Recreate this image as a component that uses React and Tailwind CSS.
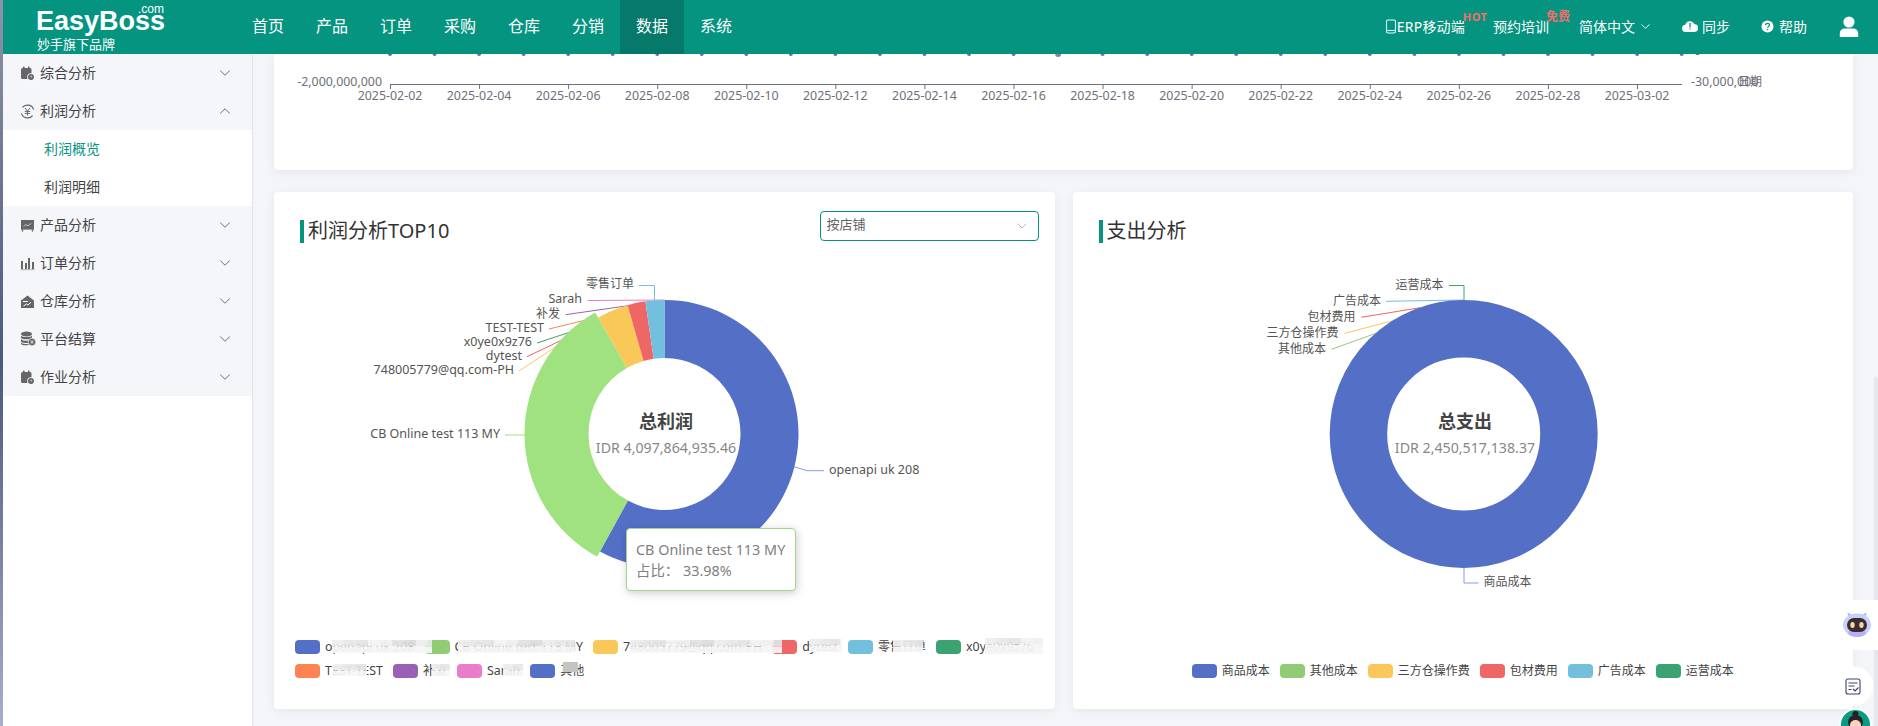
import React from 'react';
import { ChevronDown, ChevronUp } from 'lucide-react';

const NAV = ['首页', '产品', '订单', '采购', '仓库', '分销', '数据', '系统'];
const AXIS_COLOR = '#6e7079';
const BLUE = '#5470c6';

// angle is clockwise from 12 o'clock, in degrees
const polar = (cx, cy, r, deg) => {
  const a = (deg * Math.PI) / 180;
  return [cx + r * Math.sin(a), cy - r * Math.cos(a)];
};

const arcPath = (cx, cy, r0, r1, from, to) => {
  const large = to - from > 180 ? 1 : 0;
  const [x1, y1] = polar(cx, cy, r1, from);
  const [x2, y2] = polar(cx, cy, r1, to);
  const [x3, y3] = polar(cx, cy, r0, to);
  const [x4, y4] = polar(cx, cy, r0, from);
  return `M${x1} ${y1}A${r1} ${r1} 0 ${large} 1 ${x2} ${y2}L${x3} ${y3}A${r0} ${r0} 0 ${large} 0 ${x4} ${y4}Z`;
};

const CalendarIcon = () => (
  <svg width="15" height="15" viewBox="0 0 15 15" fill="#666">
    <rect x="1" y="2" width="10.5" height="11" rx="1.5" />
    <rect x="3" y="0.5" width="1.6" height="3" rx="0.6" />
    <rect x="8" y="0.5" width="1.6" height="3" rx="0.6" />
    <circle cx="11" cy="11" r="3.8" fill="#fff" />
    <circle cx="11" cy="11" r="3" fill="#666" />
    <path d="M11 9.6V11h1.2" stroke="#fff" strokeWidth="0.7" fill="none" />
  </svg>
);

const YuanIcon = () => (
  <svg width="15" height="15" viewBox="0 0 15 15" fill="none" stroke="#666">
    <path d="M13.6 5.6A6.5 6.5 0 0 0 2.4 3.4M1.4 9.4a6.5 6.5 0 0 0 11.2 2.2" strokeWidth="1.2" />
    <path d="M5 4l2.5 3L10 4M4.8 7.4h5.4M4.8 9.4h5.4M7.5 7v4.4" strokeWidth="1" />
  </svg>
);

const ProductIcon = () => (
  <svg width="15" height="15" viewBox="0 0 15 15">
    <rect x="1" y="2" width="13" height="9.6" fill="#666" />
    <path d="M3.5 8.5l2.5-2 2 1.4 3.2-2.6" stroke="#ddd" strokeWidth="0.8" fill="none" />
    <path d="M2.5 11.5v2M12.5 11.5v2" stroke="#666" strokeWidth="1.4" />
  </svg>
);

const BarsIcon = () => (
  <svg width="15" height="15" viewBox="0 0 15 15" fill="#666">
    <rect x="1" y="5" width="2" height="8" />
    <rect x="5" y="7" width="2" height="6" />
    <rect x="8" y="2" width="2" height="11" />
    <rect x="12" y="6" width="2" height="7" />
    <rect x="0.5" y="13" width="14" height="1.2" fill="#bbb" />
  </svg>
);

const HouseIcon = () => (
  <svg width="15" height="15" viewBox="0 0 15 15">
    <path d="M1 6.5L7.5 1.5l6.5 5V14H1z" fill="#666" />
    <path d="M3.5 12l3-2 1.4 1 3-2.6" stroke="#fff" strokeWidth="1" fill="none" />
    <rect x="2.8" y="7" width="5" height="1" fill="#fff" />
  </svg>
);

const CoinsIcon = () => (
  <svg width="16" height="16" viewBox="0 0 16 16">
    <ellipse cx="6.5" cy="3" rx="5.5" ry="2.4" fill="#666" />
    <path d="M1 4.6c1 2 10 2 11 0v2.2c-1 2-10 2-11 0zM1 8c1 2 7 2 8 1.6v2.2c-2 .6-7 .4-8-1.4zM1 11.4c1 1.6 6 2 8 1.4v.6c-2 1.4-7 1.2-8-.4z" fill="#666" />
    <circle cx="12" cy="11" r="3.8" fill="#666" stroke="#fff" strokeWidth="0.6" />
    <path d="M10.6 9.2l1.4 1.6 1.4-1.6M10.6 11.2h2.8M12 10.8v2.2" stroke="#fff" strokeWidth="0.7" fill="none" />
  </svg>
);

const SideItem = ({ icon, label, open }) => (
  <div className="flex h-[38px] items-center pl-[17px] pr-[18px] text-[14px] text-[#444]">
    <span className="flex w-[20px] shrink-0">{icon}</span>
    <span className="flex-1 pb-[2px]">{label}</span>
    {open ? <ChevronUp size={18} strokeWidth={1} /> : <ChevronDown size={18} strokeWidth={1} />}
  </div>
);

const Sidebar = () => (
  <aside className="w-[250px] shrink-0 border-r border-[#e2e4ec] bg-white">
    <div className="bg-[#f5f6fa]">
      <SideItem icon={<CalendarIcon />} label="综合分析" />
      <SideItem icon={<YuanIcon />} label="利润分析" open />
      <div className="bg-white text-[14px]">
        <div className="flex h-[38px] items-center pb-[2px] pl-[41px] text-[#06947f]">利润概览</div>
        <div className="flex h-[38px] items-center pb-[2px] pl-[41px] text-[#444]">利润明细</div>
      </div>
      <SideItem icon={<ProductIcon />} label="产品分析" />
      <SideItem icon={<BarsIcon />} label="订单分析" />
      <SideItem icon={<HouseIcon />} label="仓库分析" />
      <SideItem icon={<CoinsIcon />} label="平台结算" />
      <SideItem icon={<CalendarIcon />} label="作业分析" />
    </div>
  </aside>
);

const Header = () => (
  <header className="flex h-[54px] shrink-0 items-center bg-[#05947f] text-white">
    <div className="relative h-[54px] w-[233px] shrink-0 pl-[33px]">
      <div className="absolute left-[135px] top-[1px] text-[12px] leading-[16px] font-['Liberation_Sans',sans-serif]">.com</div>
      <div className="pt-[6px] text-[27px] font-bold leading-[30px] font-['Liberation_Sans',sans-serif]">EasyBoss</div>
      <div className="pl-[1px] pt-[1px] text-[13px] leading-[15px]">妙手旗下品牌</div>
    </div>
    <nav className="flex h-full text-[16px]">
      {NAV.map(n => (
        <div key={n} className={`flex h-full w-[64px] items-center justify-center pb-[2px] ${n === '数据' ? 'bg-[#06796a]' : ''}`}>{n}</div>
      ))}
    </nav>
    <div className="ml-auto flex items-center pb-[2px] pr-[19px] text-[14px]">
      <div className="relative flex items-center">
        <svg width="12" height="15" viewBox="0 0 12 15" fill="none" stroke="#dff" strokeWidth="1.1">
          <rect x="1.5" y="1" width="9" height="13" rx="1.5" />
          <path d="M1.5 11.5h9" />
        </svg>
        <span className="tracking-[0.2px]">ERP移动端</span>
        <span className="absolute left-[78px] top-[-7px] text-[11px] font-bold tracking-[0.5px] text-[#f56c6c]">HOT</span>
      </div>
      <div className="relative ml-[28px]">
        <span>预约培训</span>
        <span className="absolute left-[53px] top-[-8px] whitespace-nowrap text-[12px] font-bold text-[#f56c6c]">免费</span>
      </div>
      <div className="ml-[30px] flex items-center">
        <span>简体中文</span>
        <ChevronDown size={15} strokeWidth={1.5} className="ml-[3px]" />
      </div>
      <div className="ml-[29px] flex items-center">
        <svg width="16" height="12" viewBox="0 0 16 12" fill="#fff">
          <path d="M4 12a3.6 3.6 0 0 1-.6-7.2A4.8 4.8 0 0 1 12.4 4 4 4 0 0 1 12 12z" />
          <path d="M8 3v4.4M8 8.4v1.2" stroke="#05947f" strokeWidth="1.3" />
        </svg>
        <span className="ml-[4px]">同步</span>
      </div>
      <div className="ml-[31px] flex items-center">
        <svg width="13" height="13" viewBox="0 0 13 13">
          <circle cx="6.5" cy="6.5" r="6" fill="#fff" />
          <path d="M4.6 5.2c0-2.5 3.9-2.4 3.9-.2 0 1.3-1.9 1.5-1.9 2.8M6.6 9v1.2" stroke="#05947f" strokeWidth="1.3" fill="none" />
        </svg>
        <span className="ml-[5px]">帮助</span>
      </div>
      <svg className="ml-[32px]" width="20" height="21" viewBox="0 0 20 21" fill="#fff">
        <circle cx="10" cy="6" r="5.6" />
        <path d="M0.8 21v-3.5C0.8 14 3.4 12.4 6 12.4h8c2.6 0 5.2 1.6 5.2 5.1V21z" />
      </svg>
    </div>
  </header>
);

const TrendCard = () => {
  const ticks = [...Array(15).keys()];
  const dates = ['02-02', '02-04', '02-06', '02-08', '02-10', '02-12', '02-14', '02-16', '02-18', '02-20', '02-22', '02-24', '02-26', '02-28', '03-02'];
  return (
    <div className="h-[116px] shrink-0 rounded-b bg-white shadow-[0_2px_8px_rgba(60,70,110,0.08)]">
      <svg className="block h-[116px] w-full" viewBox="274 54 1579 116" fontSize="12.4" fill={AXIS_COLOR}>
        {[...Array(30).keys()].map(i => (
          <circle key={i} cx={390 + i * 44.54} cy="54" r={i === 15 ? 3 : 2} fill={i === 15 ? '#7b86a8' : BLUE} />
        ))}
        <text x="1694" y="55">0</text>
        <path d="M390 84.5H1682" stroke={AXIS_COLOR} />
        {ticks.map(i => (
          <path key={i} d={`M${390.5 + i * 89.07} 84V89`} stroke={AXIS_COLOR} />
        ))}
        {ticks.map((i) => (
          <text key={i} x={390 + i * 89.07} y="100" textAnchor="middle">2025-{dates[i]}</text>
        ))}
        <text x="382" y="86" textAnchor="end">-2,000,000,000</text>
        <text x="1691" y="86">-30,000,000</text>
        <text x="1738" y="86" fontSize="12">日期</text>
      </svg>
    </div>
  );
};

const PieLabel = ({ x, y, anchor = 'start', size = 12, children }) => (
  <text x={x} y={y + 4} textAnchor={anchor} fontSize={size} fill="#555">{children}</text>
);

const Title = ({ children }) => (
  <h2 className="ml-[26px] mt-[28px] flex h-[23px] items-center border-l-4 border-[#06947f] pb-[2px] pl-[4px] text-[20px] font-normal leading-[21px] text-[#333]">{children}</h2>
);

const Center = ({ x, title, value }) => (
  <>
    <text x={x} y="428" textAnchor="middle" fontSize="18" fontWeight="700" fill="#444">{title}</text>
    <text x={x} y="453" textAnchor="middle" fontSize="14.2" fill="#888">{value}</text>
  </>
);

const ProfitPie = () => {
  const cx = 664.5;
  const cy = 434;
  return (
    <svg className="block h-[380px] w-[780px]" viewBox="274 252 780 380" fill="none">
      <path d="M639 285.5h15.5V300" stroke="#73c0de" />
      <path d="M587.5 300.5L664.6 300" stroke="#ea7ccc" />
      <path d="M565.6 314.7L628 305.7" stroke="#9a60b4" />
      <path d="M549 329L586 320" stroke="#fc8452" />
      <path d="M537 343L573.5 331" stroke="#3ba272" />
      <path d="M527 356.7L566 338" stroke="#ee6666" />
      <path d="M519 371L556 346.7" stroke="#fac858" />
      <path d="M505 435H526" stroke="#a0e180" />
      <path d="M794 466.7L807 470.7H824" stroke="#8a9bd8" />
      <path d={arcPath(cx, cy, 76, 134, 0, 208.8)} fill={BLUE} />
      <path d={arcPath(cx, cy, 76, 134, 330.3, 344)} fill="#fac858" />
      <path d={arcPath(cx, cy, 76, 134, 344, 351.8)} fill="#ee6666" />
      <path d={arcPath(cx, cy, 76, 134, 351.8, 360)} fill="#73c0de" />
      <path d={arcPath(cx, cy, 76, 140, 208.8, 330.3)} fill="#a0e180" />
      <PieLabel x={586} y={284}>零售订单</PieLabel>
      <PieLabel x={582} y={299} anchor="end" size={12.5}>Sarah</PieLabel>
      <PieLabel x={560} y={314} anchor="end">补发</PieLabel>
      <PieLabel x={544} y={328} anchor="end" size={12.5}>TEST-TEST</PieLabel>
      <PieLabel x={532} y={342} anchor="end" size={12.5}>x0ye0x9z76</PieLabel>
      <PieLabel x={522} y={356} anchor="end" size={12.5}>dytest</PieLabel>
      <PieLabel x={514} y={370} anchor="end" size={12.5}>748005779@qq.com-PH</PieLabel>
      <PieLabel x={500} y={434} anchor="end" size={12.5}>CB Online test 113 MY</PieLabel>
      <PieLabel x={829} y={470} size={12.5}>openapi uk 208</PieLabel>
      <Center x={666} title="总利润" value="IDR 4,097,864,935.46" />
    </svg>
  );
};

const CostPie = () => {
  const cx = 1463.7;
  const cy = 434;
  return (
    <svg className="block h-[380px] w-[780px]" viewBox="1073 252 780 380" fill="none">
      <path d="M1449 285.5h15V300" stroke="#3ba272" />
      <path d="M1386 301.3L1463.7 300" stroke="#73c0de" />
      <path d="M1361.4 317.3L1420 307.7" stroke="#ee6666" />
      <path d="M1344.6 333.3L1398 319.3" stroke="#fac858" />
      <path d="M1331.4 349.3L1376 333.3" stroke="#91cc75" />
      <path d="M1464 566V583H1478.5" stroke="#8a9bd8" />
      <circle cx={cx} cy={cy} r="105.25" stroke={BLUE} strokeWidth="57.5" />
      <PieLabel x={1443.4} y={285} anchor="end">运营成本</PieLabel>
      <PieLabel x={1381} y={300.7} anchor="end">广告成本</PieLabel>
      <PieLabel x={1355.4} y={316.7} anchor="end">包材费用</PieLabel>
      <PieLabel x={1338.6} y={332.7} anchor="end">三方仓操作费</PieLabel>
      <PieLabel x={1326} y={348.7} anchor="end">其他成本</PieLabel>
      <PieLabel x={1483.6} y={581.7}>商品成本</PieLabel>
      <Center x={1465} title="总支出" value="IDR 2,450,517,138.37" />
    </svg>
  );
};

const LegendItem = ({ color, label, latin }) => (
  <div className={`flex h-[14px] items-center leading-[14px] text-[#444] ${latin ? 'text-[12.4px]' : 'text-[12px]'}`}>
    <span className={`mr-[5px] h-[14px] w-[25px] rounded-[4px] ${color}`} />
    <span className="whitespace-nowrap">{label}</span>
  </div>
);

// pixelated patch that hides part of a legend name, as in the screenshot
const Mosaic = ({ className, w, h = 13, size = 12 }) => {
  const cols = Math.ceil(w / size);
  const rows = Math.ceil(h / 6.5);
  const shades = ['#eeeeee', '#e2e2e2', '#f4f4f4', '#e8e8e8', '#dcdcdc', '#f0f0f0', '#e5e5e5'];
  return (
    <svg className={`absolute ${className}`} width={w} height={h} opacity="0.94">
      {[...Array(cols).keys()].map(c => [...Array(rows).keys()].map(r => (
        <rect key={`${c}-${r}`} x={c * size} y={r * 6.5} width={size} height={6.5} fill={r === 0 ? shades[(c * 3) % 7] : '#f6f6f6'} />
      )))}
    </svg>
  );
};

const ProfitLegend = () => (
  <div className="relative mt-[8px] flex flex-wrap gap-x-[10px] gap-y-[10px] pl-[21px]">
    <LegendItem color="bg-[#5470c6]" label="openapi uk 208" latin />
    <LegendItem color="bg-[#91cc75]" label="CB Online test 113 MY" latin />
    <LegendItem color="bg-[#fac858]" label="748005779@qq.com-PH" latin />
    <LegendItem color="bg-[#ee6666]" label="dytest" latin />
    <LegendItem color="bg-[#73c0de]" label="零售订单" />
    <LegendItem color="bg-[#3ba272]" label="x0ye0x9z76" latin />
    <LegendItem color="bg-[#fc8452]" label="TEST-TEST" latin />
    <LegendItem color="bg-[#9a60b4]" label="补发" />
    <LegendItem color="bg-[#ea7ccc]" label="Sarah" latin />
    <LegendItem color="bg-[#5470c6]" label="其他" />
    <Mosaic className="left-[58px] top-0" w={100} />
    <Mosaic className="left-[184px] top-0" w={117} />
    <Mosaic className="left-[356px] top-0" w={152} />
    <Mosaic className="left-[536px] top-[-1px]" w={32} size={10} />
    <Mosaic className="left-[619px] top-0" w={30} size={10} h={12} />
    <Mosaic className="left-[711px] top-[-2px]" w={58} h={16} />
    <Mosaic className="left-[59px] top-[24px]" w={34} size={11} h={12} />
    <Mosaic className="left-[158px] top-[24px]" w={18} size={9} h={12} />
    <Mosaic className="left-[229px] top-[24px]" w={20} size={10} h={12} />
    <div className="absolute left-[289px] top-[22px] h-[10px] w-[15px] bg-[#c4c4c4]" />
  </div>
);

const CostLegend = () => (
  <div className="mt-[32px] flex justify-center gap-x-[10px]">
    <LegendItem color="bg-[#5470c6]" label="商品成本" />
    <LegendItem color="bg-[#91cc75]" label="其他成本" />
    <LegendItem color="bg-[#fac858]" label="三方仓操作费" />
    <LegendItem color="bg-[#ee6666]" label="包材费用" />
    <LegendItem color="bg-[#73c0de]" label="广告成本" />
    <LegendItem color="bg-[#3ba272]" label="运营成本" />
  </div>
);

const FloatButtons = () => (
  <>
    <div className="absolute right-0 top-[377px] h-[349px] w-[4px] rounded-t bg-[#e6e7ec]" />
    <div className="absolute right-0 top-[600px] flex h-[50px] w-[51px] items-center rounded-l-full bg-white pl-[15px]">
      <svg width="30" height="26" viewBox="0 0 30 26">
        <path d="M6 4L5.5 0.5 10 3zM24 4l.5-3.500L20 3z" fill="#a9b6f5" />
        <ellipse cx="15" cy="13" rx="14" ry="11.500" fill="#c6d0fb" />
        <ellipse cx="15" cy="21" rx="9" ry="4" fill="#b5b0f5" />
        <rect x="5" y="6" width="20" height="14" rx="7" fill="#3a2c30" />
        <ellipse cx="10.500" cy="13" rx="2.200" ry="3" fill="#f7d9a0" />
        <ellipse cx="19.500" cy="13" rx="2.200" ry="3" fill="#f7d9a0" />
      </svg>
    </div>
    <div className="absolute right-[5px] top-[666px] flex h-[40px] w-[40px] items-center justify-center rounded-full bg-white">
      <svg width="16" height="17" viewBox="0 0 16 17" fill="none" stroke="#3f4268" strokeWidth="1.100">
        <rect x="1" y="1" width="14" height="15" rx="2" />
        <path d="M3.500 5h9M3.500 8h6M3.500 11.500h3M8 11l2 2 3.500-3.500" />
      </svg>
    </div>
    <div className="absolute right-[6px] top-[708px] h-[33px] w-[33px] overflow-hidden rounded-full border-2 border-white bg-[#0a9b82]">
      <svg width="29" height="29" viewBox="0 0 29 29">
        <circle cx="14.500" cy="4" r="3" fill="#222" />
        <ellipse cx="14.500" cy="12" rx="7.500" ry="7" fill="#2a2226" />
        <ellipse cx="14.500" cy="15" rx="5.500" ry="5" fill="#f8d4c0" />
      </svg>
    </div>
  </>
);

const App = () => (
  <div className="relative flex h-[726px] w-full overflow-hidden bg-[#f4f5f9] font-['Noto_Sans','Noto_Sans_CJK_SC',sans-serif]">
    <div className="w-[3px] shrink-0 bg-gradient-to-b from-[#8f93a8] via-[#4a5a78] to-[#a9aecb]" />
    <div className="flex min-w-0 flex-1 flex-col">
      <Header />
      <div className="flex min-h-0 flex-1">
        <Sidebar />
        <main className="flex min-w-0 flex-1 flex-col gap-[22px] pl-[21px] pr-[25px]">
          <TrendCard />
          <div className="flex gap-[18px]">
            <section className="relative h-[517px] flex-1 rounded bg-white shadow-[0_2px_8px_rgba(60,70,110,0.08)]">
              <div className="flex h-[60px] items-start justify-between pr-[16px]">
                <Title>利润分析TOP10</Title>
                <div className="mt-[19px] flex h-[30px] w-[219px] items-center justify-between rounded border border-[#06947f] pl-[6px] pr-[8px] text-[13px] text-[#606266]">
                  <span className="pb-[2px]">按店铺</span>
                  <ChevronDown size={16} strokeWidth={1} className="text-[#8a9099]" />
                </div>
              </div>
              <ProfitPie />
              <ProfitLegend />
              <div className="absolute left-[352px] top-[336px] flex h-[63px] w-[170px] flex-col justify-center rounded border border-[#a0d68a] bg-white pl-[9px] text-[14.4px] leading-[21px] text-[#808080] shadow-[1px_2px_10px_rgba(0,0,0,0.2)]">
                <div>CB Online test 113 MY</div>
                <div>占比： 33.98%</div>
              </div>
            </section>
            <section className="h-[517px] flex-1 rounded bg-white shadow-[0_2px_8px_rgba(60,70,110,0.08)]">
              <div className="flex h-[60px] items-start">
                <Title>支出分析</Title>
              </div>
              <CostPie />
              <CostLegend />
            </section>
          </div>
        </main>
      </div>
    </div>
    <FloatButtons />
  </div>
);

export default App;
